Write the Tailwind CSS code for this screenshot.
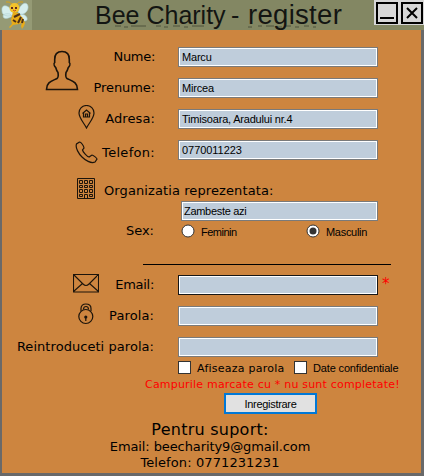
<!DOCTYPE html>
<html lang="ro">
<head>
<meta charset="utf-8">
<title>Bee Charity - register</title>
<script src="https://cdn.jsdelivr.net/npm/@tailwindcss/browser@4"></script>
</head>
<body class="w-[424px] h-[476px] overflow-hidden bg-[#cd853f] text-black font-['DejaVu_Sans',sans-serif] text-[13px] leading-5 whitespace-nowrap">
<header class="h-[30px] flex bg-[#838763]">
  <div class="w-8 h-[30px] bg-[#959a75] shrink-0">
    <svg class="w-8 h-[30px]" viewBox="0 0 32 30">
      <path d="M13 11C6 3 1 5 2 11c0 5 6 6 11 4zM18 11c3-8 9-10 10-5 1 5-4 9-9 9zM10 14c-7-1-8 2-6 4 2 1 6 0 8-2zM20 14c5 0 8 3 7 6-3 3-7-1-9-4z" fill="#d6eeed" stroke="#a9cdd0" stroke-width=".6"/>
      <path d="M12 4 9 2H6M17 4l2-2 4 0" fill="none" stroke="#d6a319" stroke-width="1"/>
      <ellipse cx="14.500" cy="8" rx="5" ry="5" fill="#f4c32b"/>
      <path d="m13 12 5 1 5 5 2 5-1 3 -2 3-1-3 1-3-3 1-6 1-3 3-1-1 3-3-1-4z" fill="#e9ac18"/>
      <path d="m14 17 6-3M13 20l3 2M18 23l3-6M22 23l1-4" fill="none" stroke="#4c3019" stroke-width="2"/>
      <path d="M11 7h2v2h-2zM15 7h2v2h-2z" fill="#5f2a20"/>
      <path d="M13 10q2 2 3 0" fill="none" stroke="#c34920"/>
    </svg>
  </div>
  <div class="relative flex-1 h-[30px]">
    <svg class="absolute left-[79px] top-[25px] w-[218px] h-[3px]" viewBox="0 0 218 3"><path d="M4 1h6m3 1h4m3-1h15m10 0h5m3 1h4m5-1h7m4 1h4m4-1h12m44 1h4m6-1h4m4 0h8m3 1h5m4-1h5m4 1h4m5-1h5m4 1h3" stroke="#4f523d" stroke-width="1" fill="none"/></svg>
    <h1 class="relative flex items-baseline pl-[63px] leading-[30px] text-[25px] font-normal font-['Liberation_Sans',sans-serif] text-[#131512]"><span class="w-[136px]">Bee Charity</span><span class="w-[17px]">-</span><span class="text-[27.5px] tracking-[0.3px]">register</span></h1>
  </div>
  <div class="w-[50px] h-[25px] bg-[#d7d7d7] flex gap-[3px] pl-[2px] pt-[2px] shrink-0">
    <svg class="w-[22px] h-[22px]" viewBox="0 0 22 22"><path d="M1 1h20v20H1zM4 16h14" fill="none" stroke="#000" stroke-width="2"/></svg>
    <svg class="w-[22px] h-[22px]" viewBox="0 0 22 22"><path d="M1 1h20v20H1zM6 6l10 10M16 6 6 16" fill="none" stroke="#000" stroke-width="2"/></svg>
  </div>
</header>
<main class="h-[446px] border-l-2 border-r-[3px] border-b-[3px] border-[#696969] pt-[17px]">
  <section class="flex">
    <svg class="w-[34px] h-[42px] ml-[43px] mt-[3px]" viewBox="0 0 34 42"><path d="M17 1.500c-5 0-7.500 3-7.300 8v3c-1.500 1.500 0 4 1 5 .8 3 1.500 4 2.300 5 .5 3 .3 5-1 6C7 31 1.500 32 1.500 39.500h31C32.500 32 27 31 22 28.500c-1.300-1-1.500-3-1-6 .8-1 1.500-2 2.300-5 1-1 2.500-3.500 1-5v-3c.2-5-2.300-8-7.300-8z" fill="none" stroke="#1c140b" stroke-width="1.600"/></svg>
    <div class="w-[76px] flex flex-col items-end gap-[11px]"><label class="tracking-[-0.3px]">Nume:</label><label class="tracking-[-0.1px]">Prenume:</label></div>
    <div class="ml-[23px] flex flex-col gap-[11px] font-['Liberation_Sans',sans-serif] text-[11px] leading-4">
      <div class="w-[200px] h-5 border border-[#7a7a7a] bg-white p-px"><div class="h-4 bg-[#bfcddb] pl-[2px] tracking-[-0.2px]">Marcu</div></div>
      <div class="w-[200px] h-5 border border-[#7a7a7a] bg-white p-px"><div class="h-4 bg-[#bfcddb] pl-[2px] tracking-[-0.2px]">Mircea</div></div>
    </div>
  </section>
  <section class="flex mt-[11px] h-5">
    <svg class="w-[18px] h-6 ml-[76px] -mt-1 shrink-0" viewBox="0 0 18 24"><path d="M8.500 23C6 18 1 13 1 8a7.500 7.500 0 0 1 15 0c0 5-5 10-7.500 15zM4.500 8.500l4-3.500 4 3.500M5.500 8v4h6V8M7.500 12V9h2v3" fill="none" stroke="#1c140b" stroke-width="1.200"/></svg>
    <label class="w-[59px] text-right tracking-[0.1px]">Adresa:</label>
    <div class="ml-[23px] w-[200px] h-5 border border-[#7a7a7a] bg-white p-px font-['Liberation_Sans',sans-serif] text-[11px] leading-4"><div class="h-4 bg-[#bfcddb] pl-[2px] tracking-[-0.2px]">Timisoara, Aradului nr.4</div></div>
  </section>
  <section class="flex mt-[11px] h-5">
    <svg class="w-[23px] h-[23px] ml-[73px] mt-[1px] shrink-0" viewBox="0 0 23 23"><path d="M4.500 1 1.500 3C0 7 4 13 7 16s9 7 13 5l2-3c0-1-4-4-5-4l-3 2c-2-.5-6-5-6.500-7l1.500-2C9 5 6 1 4.500 1z" fill="none" stroke="#1c140b" stroke-width="1.200"/></svg>
    <label class="w-[57px] flex justify-end pt-[3px] tracking-[0.3px]">Telefon:</label>
    <div class="ml-[23px] w-[200px] h-5 border border-[#7a7a7a] bg-white p-px font-['Liberation_Sans',sans-serif] text-[11px] leading-4"><div class="h-4 bg-[#bfcddb] pl-[2px] tracking-[-0.05px]">0770011223</div></div>
  </section>
  <section class="flex mt-[18px] h-[23px]">
    <svg class="w-[18px] h-[21px] ml-[75px] shrink-0" viewBox="0 0 18 21"><path d="M.5.500h17v20H.5zM2.500 2.500h3v3h-3zM7.500 2.500h3v3h-3zM12.500 2.500h3v3h-3zM2.500 7.500h3v2h-3zM7.500 7.500h3v2h-3zM12.500 7.500h3v2h-3zM2.500 11.500h3v3h-3zM7.500 11.500h3v3h-3zM12.500 11.500h3v3h-3zM2.500 16.500h3v2h-3zM7.500 20v-3.500h3V20M12.500 16.500h3v2h-3z" fill="none" stroke="#1c140b"/></svg>
    <label class="ml-[9px] pt-[3px] tracking-[0.1px]">Organizatia reprezentata:</label>
  </section>
  <div class="ml-[179px] w-[197px] h-5 border border-[#7a7a7a] bg-white p-px font-['Liberation_Sans',sans-serif] text-[11px] leading-4"><div class="h-4 bg-[#bfcddb] pl-px tracking-[-0.3px]">Zambeste azi</div></div>
  <section class="flex h-[21px]">
    <span class="w-[152px] text-right">Sex:</span>
    <div class="ml-[27px] w-[125px] pt-[3px] flex gap-[5px] font-['Liberation_Sans',sans-serif] text-[11px] leading-4">
      <svg class="w-[14px] h-[14px]" viewBox="0 0 14 14"><circle cx="7" cy="7" r="6" fill="#fff" stroke="#333"/></svg><span class="tracking-[-0.5px] pl-px">Feminin</span>
    </div>
    <div class="pt-[3px] flex gap-[5px] font-['Liberation_Sans',sans-serif] text-[11px] leading-4">
      <svg class="w-[14px] h-[14px]" viewBox="0 0 14 14"><circle cx="7" cy="7" r="6" fill="#fff" stroke="#333"/><circle cx="7" cy="7" r="3.500" fill="#333"/></svg><span class="tracking-[-0.3px] pl-px">Masculin</span>
    </div>
  </section>
  <hr class="mt-[22px] ml-[141px] w-[248px] border-t border-black">
  <section class="flex mt-[10px] h-5">
    <svg class="w-[26px] h-[19px] ml-[71px] -mt-px shrink-0" viewBox="0 0 26 19"><path d="M.5.500h25v17.500H.5zM.5.500 10 10q3 3 6 0L25.500.5M.5 17.500l9-8M25.500 17.500l-9-8" fill="none" stroke="#1c140b" stroke-width="1.100"/></svg>
    <label class="w-[55px] text-right tracking-[-0.3px]">Email:</label>
    <div class="ml-[24px] w-[200px] h-5 border border-[#171717] bg-white p-px"><div class="h-4 bg-[#bfcddb]"></div></div>
    <span class="ml-1 text-[#ff0000] leading-[18px] text-[15px]">*</span>
  </section>
  <section class="flex mt-[11px] h-5">
    <svg class="w-4 h-[22px] ml-[76px] -mt-[3px] shrink-0" viewBox="0 0 16 22"><path d="M3 8V5.500C3 2.500 5 1 7.800 1S13 2.500 13 5.500V8M5.500 6.500c0-4 5-4 5 0M7.800 15v3" fill="none" stroke="#1c140b" stroke-width="1.200"/><circle cx="7.800" cy="13.500" r="7" fill="none" stroke="#1c140b" stroke-width="1.200"/><circle cx="7.800" cy="14" r="1.600" fill="#1c140b"/></svg>
    <label class="w-[60px] text-right tracking-[0.1px]">Parola:</label>
    <div class="ml-[24px] w-[200px] h-5 border border-[#7a7a7a] bg-white p-px"><div class="h-4 bg-[#bfcddb]"></div></div>
  </section>
  <section class="flex mt-[11px] h-5">
    <label class="w-[152px] text-right tracking-[0.05px]">Reintroduceti parola:</label>
    <div class="ml-[24px] w-[200px] h-5 border border-[#7a7a7a] bg-white p-px"><div class="h-4 bg-[#bfcddb]"></div></div>
  </section>
  <section class="flex mt-1 h-[15px] ml-[176px] text-[11px] leading-[15px]">
    <span class="w-[13px] h-[13px] border border-[#333] bg-white"></span><span class="ml-[6px] w-[97px] tracking-[0.25px]">Afiseaza parola</span>
    <span class="w-[13px] h-[13px] border border-[#333] bg-white"></span><span class="ml-[6px] font-['Liberation_Sans',sans-serif] tracking-[-0.15px]">Date confidentiale</span>
  </section>
  <p class="ml-[143px] h-[17px] leading-[17px] text-[11px] text-[#ff0000] tracking-[0.2px]">Campurile marcate cu * nu sunt completate!</p>
  <button class="block ml-[222px] w-[93px] h-[21px] border-2 border-[#0078d7] bg-[#e1e1e1] font-['Liberation_Sans',sans-serif] text-[11px] leading-[18px] tracking-[-0.3px]">Inregistrare</button>
  <footer class="w-[416px] text-center leading-4">
    <p class="mt-[6px] h-[19px] text-[16px] leading-5 tracking-[0.25px]">Pentru suport:</p>
    <p class="tracking-[-0.1px]">Email: beecharity9@gmail.com</p>
    <p class="tracking-[0.1px]">Telefon: 0771231231</p>
  </footer>
</main>
</body>
</html>
